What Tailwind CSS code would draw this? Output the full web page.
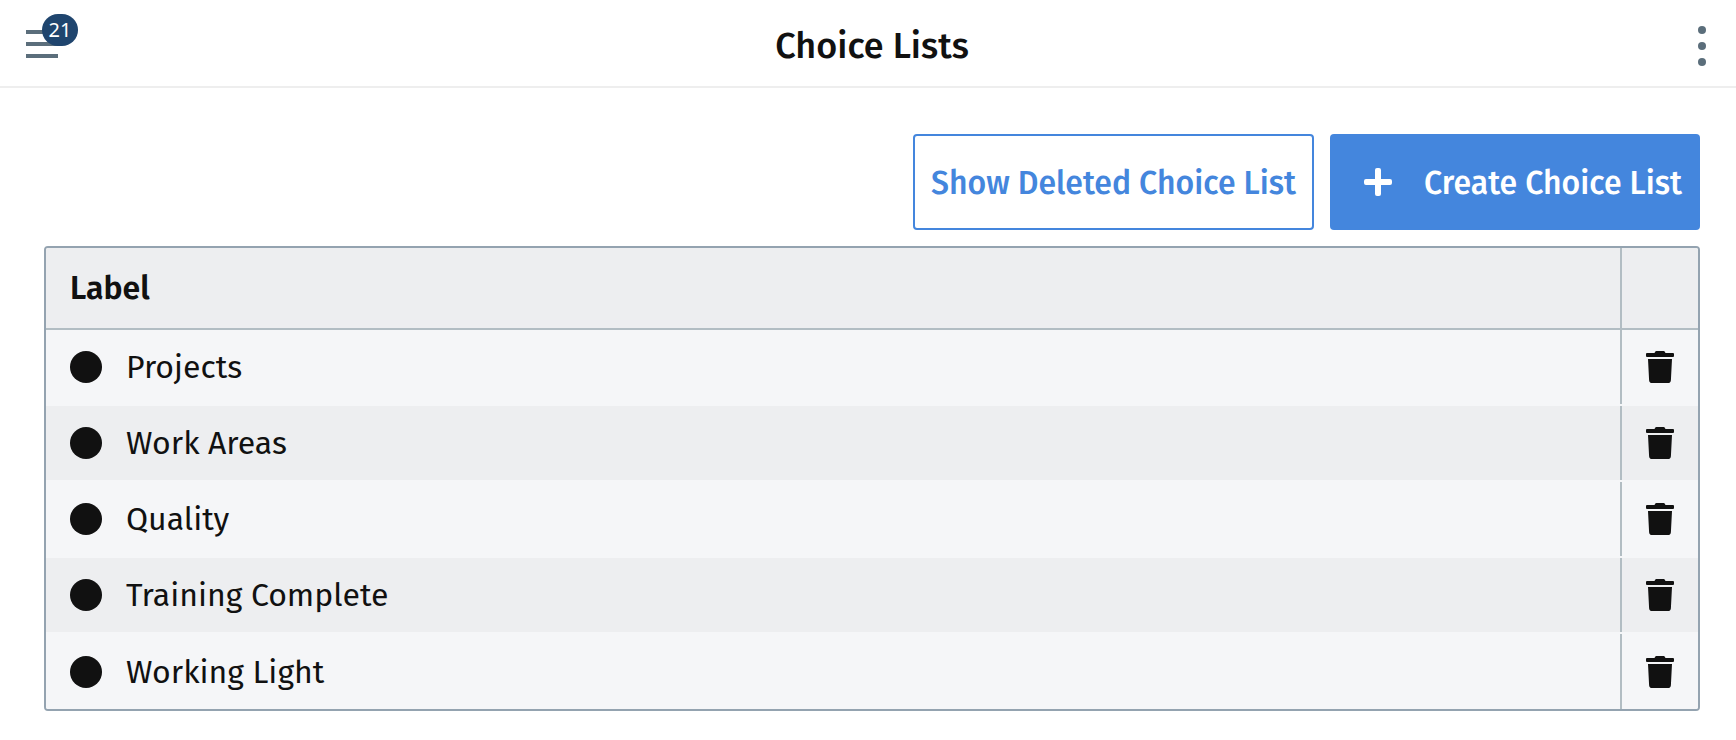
<!DOCTYPE html>
<html lang="en">
<head>
<meta charset="utf-8">
<meta name="viewport" content="width=device-width, initial-scale=1">
<title>Choice Lists</title>
<script src="https://cdn.jsdelivr.net/npm/@tailwindcss/browser@4"></script>
</head>
<body class="bg-white font-['Fira_Sans','Noto_Sans',sans-serif] text-[#111]">
<svg class="hidden" aria-hidden="true">
  <symbol id="trash" viewBox="0 0 28 32">
    <path d="M1 2H8.500L9.300 .6Q9.700 0 10.400 0H17.600Q18.300 0 18.700 .6L19.500 2H27Q28 2 28 3V5Q28 6 27 6H1Q0 6 0 5V3Q0 2 1 2ZM2 8H26L24.900 29.200Q24.700 32 22 32H6Q3.300 32 3.100 29.200Z"/>
  </symbol>
</svg>
<header class="flex h-[88px] items-center justify-between border-b-2 border-[#eee] pr-[30px] pl-[26px]">
  <button type="button" aria-label="Menu, 21 notifications" class="relative mt-[2px] flex w-8 flex-col gap-2 text-white">
    <span class="h-1 w-8 bg-[#5b6e7b]"></span>
    <span class="h-1 w-8 bg-[#5b6e7b]"></span>
    <span class="h-1 w-8 bg-[#5b6e7b]"></span>
    <span class="absolute -top-4 left-4 flex h-8 w-9 items-center justify-center rounded-full bg-[#1f456e] font-['Noto_Sans',sans-serif] text-[20px] leading-8">21</span>
  </button>
  <h1 class="mt-[6px] text-[36px] leading-10 font-medium">Choice Lists</h1>
  <button type="button" aria-label="More options" class="mt-[6px] flex w-5 flex-col items-end gap-2">
    <span class="size-2 rounded-full bg-[#5b6e7b]"></span>
    <span class="size-2 rounded-full bg-[#5b6e7b]"></span>
    <span class="size-2 rounded-full bg-[#5b6e7b]"></span>
  </button>
</header>
<main class="pt-[46px] pr-9 pb-7 pl-11">
  <div class="mb-4 flex justify-end gap-4 text-[32px] leading-10 font-medium whitespace-nowrap">
    <button type="button" class="h-24 min-w-[401px] rounded border-2 border-[#4486dd] px-3 pt-[2px] text-[#4486dd]">Show Deleted Choice List</button>
    <button type="button" class="flex h-24 min-w-[370px] items-center justify-between rounded bg-[#4486dd] pr-[18px] pl-[34px] text-white">
      <svg class="size-7" viewBox="0 0 28 28" fill="currentColor" aria-hidden="true"><path d="M13 0h2q2 0 2 2v9h9q2 0 2 2v2q0 2-2 2h-9v9q0 2-2 2h-2q-2 0-2-2v-9H2q-2 0-2-2v-2q0-2 2-2h9V2q0-2 2-2z"/></svg>
      <span class="pt-[2px]">Create Choice List</span>
    </button>
  </div>
  <div class="overflow-hidden rounded border-2 border-[#94a3b0]">
    <table class="w-full border-separate border-spacing-0 text-[32px] leading-10">
      <thead class="bg-[#edeef0]">
        <tr>
          <th scope="col" class="border-b-2 border-[#b2bdc3] p-0 text-left font-semibold"><div class="flex h-20 items-center px-6">Label</div></th>
          <th scope="col" class="w-[78px] border-b-2 border-[#b2bdc3] p-0" aria-label="Delete"><div class="h-20 border-l-2 border-[#b2bdc3]"></div></th>
        </tr>
      </thead>
      <tbody>
        <tr class="bg-[#f5f6f8]">
          <td class="border-b-2 border-[#f5f6f8] p-0"><div class="flex h-[74px] items-center gap-6 px-6"><span class="size-8 rounded-full bg-[#111]"></span>Projects</div></td>
          <td class="border-b-2 border-[#f5f6f8] p-0"><div class="flex h-[74px] items-center justify-center border-l-2 border-[#b2bdc3]"><button type="button" aria-label="Delete Projects"><svg class="h-8 w-7" fill="currentColor"><use href="#trash"/></svg></button></div></td>
        </tr>
        <tr class="bg-[#edeef0]">
          <td class="border-b-2 border-[#f5f6f8] p-0"><div class="flex h-[74px] items-center gap-6 px-6"><span class="size-8 rounded-full bg-[#111]"></span>Work Areas</div></td>
          <td class="border-b-2 border-[#f5f6f8] p-0"><div class="flex h-[74px] items-center justify-center border-l-2 border-[#b2bdc3]"><button type="button" aria-label="Delete Work Areas"><svg class="h-8 w-7" fill="currentColor"><use href="#trash"/></svg></button></div></td>
        </tr>
        <tr class="bg-[#f5f6f8]">
          <td class="border-b-2 border-[#f5f6f8] p-0"><div class="flex h-[74px] items-center gap-6 px-6"><span class="size-8 rounded-full bg-[#111]"></span>Quality</div></td>
          <td class="border-b-2 border-[#f5f6f8] p-0"><div class="flex h-[74px] items-center justify-center border-l-2 border-[#b2bdc3]"><button type="button" aria-label="Delete Quality"><svg class="h-8 w-7" fill="currentColor"><use href="#trash"/></svg></button></div></td>
        </tr>
        <tr class="bg-[#edeef0]">
          <td class="border-b-2 border-[#f5f6f8] p-0"><div class="flex h-[74px] items-center gap-6 px-6"><span class="size-8 rounded-full bg-[#111]"></span>Training Complete</div></td>
          <td class="border-b-2 border-[#f5f6f8] p-0"><div class="flex h-[74px] items-center justify-center border-l-2 border-[#b2bdc3]"><button type="button" aria-label="Delete Training Complete"><svg class="h-8 w-7" fill="currentColor"><use href="#trash"/></svg></button></div></td>
        </tr>
        <tr class="bg-[#f5f6f8]">
          <td class="p-0"><div class="flex h-[75px] items-center gap-6 px-6"><span class="size-8 rounded-full bg-[#111]"></span>Working Light</div></td>
          <td class="p-0"><div class="flex h-[75px] items-center justify-center border-l-2 border-[#b2bdc3]"><button type="button" aria-label="Delete Working Light"><svg class="h-8 w-7" fill="currentColor"><use href="#trash"/></svg></button></div></td>
        </tr>
      </tbody>
    </table>
  </div>
</main>
</body>
</html>
